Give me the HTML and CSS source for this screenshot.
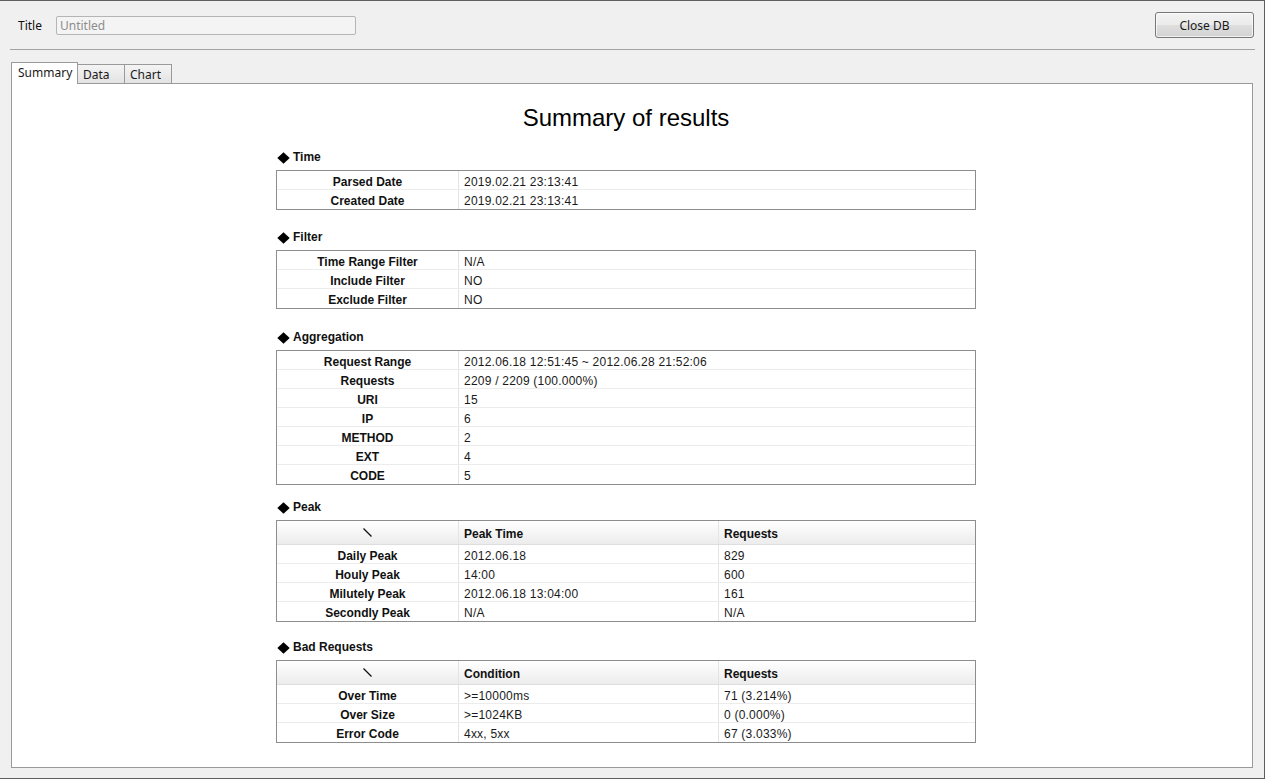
FILE: index.html
```html
<!DOCTYPE html>
<html>
<head>
<meta charset="utf-8">
<title>Summary</title>
<link rel="stylesheet" href="styles.css">
</head>
<body>
<div class="window">
  <div class="topbar">
    <label class="title-label">Title</label>
    <input class="title-input" type="text" placeholder="Untitled" disabled>
    <div class="spacer"></div>
    <button class="btn">Close DB</button>
  </div>
  <div class="sep"></div>
  <div class="tabs">
    <div class="tab active">Summary</div>
    <div class="tab">Data</div>
    <div class="tab">Chart</div>
  </div>
  <div class="panel">
    <div class="content">
      <h1 class="heading">Summary of results</h1>

      <section class="sec sec-first">
        <h2 class="sec-title"><svg class="dia" width="13" height="12" viewBox="0 0 13 12"><polygon points="6.5,0.3 12.7,6 6.5,11.7 0.3,6" fill="#000"/></svg>Time</h2>
        <div class="tbl">
          <div class="row"><div class="k">Parsed Date</div><div class="v">2019.02.21 23:13:41</div></div>
          <div class="row"><div class="k">Created Date</div><div class="v">2019.02.21 23:13:41</div></div>
        </div>
      </section>

      <section class="sec">
        <h2 class="sec-title"><svg class="dia" width="13" height="12" viewBox="0 0 13 12"><polygon points="6.5,0.3 12.7,6 6.5,11.7 0.3,6" fill="#000"/></svg>Filter</h2>
        <div class="tbl">
          <div class="row"><div class="k">Time Range Filter</div><div class="v">N/A</div></div>
          <div class="row"><div class="k">Include Filter</div><div class="v">NO</div></div>
          <div class="row"><div class="k">Exclude Filter</div><div class="v">NO</div></div>
        </div>
      </section>

      <section class="sec sec-agg">
        <h2 class="sec-title"><svg class="dia" width="13" height="12" viewBox="0 0 13 12"><polygon points="6.5,0.3 12.7,6 6.5,11.7 0.3,6" fill="#000"/></svg>Aggregation</h2>
        <div class="tbl">
          <div class="row"><div class="k">Request Range</div><div class="v">2012.06.18 12:51:45 ~ 2012.06.28 21:52:06</div></div>
          <div class="row"><div class="k">Requests</div><div class="v">2209 / 2209 (100.000%)</div></div>
          <div class="row"><div class="k">URI</div><div class="v">15</div></div>
          <div class="row"><div class="k">IP</div><div class="v">6</div></div>
          <div class="row"><div class="k">METHOD</div><div class="v">2</div></div>
          <div class="row"><div class="k">EXT</div><div class="v">4</div></div>
          <div class="row"><div class="k">CODE</div><div class="v">5</div></div>
        </div>
      </section>

      <section class="sec sec-peak">
        <h2 class="sec-title"><svg class="dia" width="13" height="12" viewBox="0 0 13 12"><polygon points="6.5,0.3 12.7,6 6.5,11.7 0.3,6" fill="#000"/></svg>Peak</h2>
        <div class="tbl">
          <div class="row three head"><div class="k"><svg class="diag" width="9" height="9" viewBox="0 0 9 9"><line x1="0.5" y1="0.5" x2="8.5" y2="8.5" stroke="#111" stroke-width="1.3"/></svg></div><div class="v">Peak Time</div><div class="v">Requests</div></div>
          <div class="row three"><div class="k">Daily Peak</div><div class="v">2012.06.18</div><div class="v">829</div></div>
          <div class="row three"><div class="k">Houly Peak</div><div class="v">14:00</div><div class="v">600</div></div>
          <div class="row three"><div class="k">Milutely Peak</div><div class="v">2012.06.18 13:04:00</div><div class="v">161</div></div>
          <div class="row three"><div class="k">Secondly Peak</div><div class="v">N/A</div><div class="v">N/A</div></div>
        </div>
      </section>

      <section class="sec sec-bad">
        <h2 class="sec-title"><svg class="dia" width="13" height="12" viewBox="0 0 13 12"><polygon points="6.5,0.3 12.7,6 6.5,11.7 0.3,6" fill="#000"/></svg>Bad Requests</h2>
        <div class="tbl">
          <div class="row three head"><div class="k"><svg class="diag" width="9" height="9" viewBox="0 0 9 9"><line x1="0.5" y1="0.5" x2="8.5" y2="8.5" stroke="#111" stroke-width="1.3"/></svg></div><div class="v">Condition</div><div class="v">Requests</div></div>
          <div class="row three"><div class="k">Over Time</div><div class="v">&gt;=10000ms</div><div class="v">71 (3.214%)</div></div>
          <div class="row three"><div class="k">Over Size</div><div class="v">&gt;=1024KB</div><div class="v">0 (0.000%)</div></div>
          <div class="row three"><div class="k">Error Code</div><div class="v">4xx, 5xx</div><div class="v">67 (3.033%)</div></div>
        </div>
      </section>
    </div>
  </div>
</div>
</body>
</html>
```
FILE: styles.css
```css
html, body {
  margin: 0;
  padding: 0;
  background: #f0f0f0;
}

.window {
  width: 1265px;
  height: 779px;
  box-sizing: border-box;
  border-top: 1px solid #5f5f5f;
  border-right: 1px solid #5f5f5f;
  border-bottom: 1px solid #5f5f5f;
  background: #f0f0f0;
  display: flex;
  flex-direction: column;
  font-family: "Noto Sans", "Open Sans", sans-serif;
  font-size: 12px;
  color: #1a1a1a;
}

.topbar {
  height: 48px;
  display: flex;
  align-items: center;
  padding: 0 10px 0 18px;
  flex: none;
}

.title-label {
  width: 38px;
  font-size: 12px;
  color: #111;
}

.title-input {
  width: 300px;
  height: 19px;
  box-sizing: border-box;
  border: 1px solid #b5b5b5;
  border-radius: 2px;
  background: #f4f4f4;
  padding: 0 3px;
  font-family: "Noto Sans", "Open Sans", sans-serif;
  font-size: 12px;
  color: #8a8a8a;
}

.title-input::placeholder {
  color: #8d8d8d;
}

.spacer {
  flex: 1;
}

.btn {
  width: 99px;
  height: 26px;
  box-sizing: border-box;
  border: 1px solid #777;
  border-radius: 3px;
  background: linear-gradient(#f3f3f3 0%, #ebebeb 48%, #dedede 52%, #d2d2d2 100%);
  font-family: "Noto Sans", "Open Sans", sans-serif;
  font-size: 12px;
  color: #1a1a1a;
  padding: 0;
  box-shadow: inset 0 0 0 1px rgba(255,255,255,0.7);
}

.sep {
  height: 1px;
  background: #a3a3a3;
  margin: 0 9px 0 10px;
  flex: none;
}

.tabs {
  display: flex;
  align-items: flex-end;
  height: 21px;
  margin-top: 12px;
  padding-left: 11px;
  flex: none;
}

.tab {
  height: 19px;
  width: 48px;
  flex: none;
  box-sizing: border-box;
  border: 1px solid #9a9a9a;
  border-bottom: 0;
  margin-left: -1px;
  padding: 0 0 0 5px;
  line-height: 19px;
  background: linear-gradient(#f4f4f4, #e3e3e3);
  color: #1a1a1a;
  overflow: hidden;
}

.tab.active {
  margin-left: 0;
  width: 67px;
  height: 22px;
  margin-bottom: -1px;
  background: #ffffff;
  padding-left: 6px;
  line-height: 20px;
  position: relative;
  z-index: 1;
}

.panel {
  flex: 1;
  margin: 0 11px 10px 11px;
  border: 1px solid #9a9a9a;
  background: #ffffff;
  padding: 20px 12px 0 0;
  overflow: hidden;
}

.content {
  width: 700px;
  margin: 0 auto;
  font-family: "Liberation Sans", Arial, sans-serif;
  color: #111;
}

.heading {
  margin: 0;
  font-family: "Liberation Sans", Arial, sans-serif;
  font-weight: normal;
  font-size: 24px;
  line-height: 28px;
  text-align: center;
  color: #000;
}

.sec {
  margin-top: 20px;
}

.sec-first {
  margin-top: 18px;
}

.sec-agg {
  margin-top: 21px;
}

.sec-peak {
  margin-top: 15px;
}

.sec-bad {
  margin-top: 18px;
}

.sec-title {
  margin: 0 0 6px 0;
  height: 14px;
  box-sizing: border-box;
  padding-top: 1px;
  line-height: 13px;
  font-size: 12px;
  font-weight: bold;
  color: #111;
  display: flex;
  align-items: center;
  gap: 3px;
}

.dia {
  display: block;
  flex: none;
  margin-left: 1px;
}

.tbl {
  border: 1px solid #8d8d8d;
  background: #fff;
}

.row {
  display: grid;
  grid-template-columns: 181px 1fr;
  height: 19px;
  box-sizing: border-box;
  border-bottom: 1px solid #ececec;
  font-size: 12px;
  line-height: 14px;
}

.row > div {
  padding-top: 4px;
}

.row:last-child {
  border-bottom: 0;
}

.row.three {
  grid-template-columns: 181px 260px 1fr;
}

.k {
  text-align: center;
  font-weight: bold;
  color: #111;
}

.v {
  border-left: 1px solid #e4e4e4;
  padding-left: 5px;
  color: #1a1a1a;
  white-space: nowrap;
  letter-spacing: 0.22px;
}

.row.head {
  height: 24px;
  line-height: 20px;
  background: linear-gradient(#ffffff, #ececec);
  border-bottom: 1px solid #dedede;
}

.row.head > div {
  padding-top: 3px;
}

.row.head .v {
  font-weight: bold;
  color: #111;
  letter-spacing: 0;
}

.row.head .k {
  display: flex;
  align-items: center;
  justify-content: center;
  padding-top: 0;
}

.diag {
  display: block;
}
```
